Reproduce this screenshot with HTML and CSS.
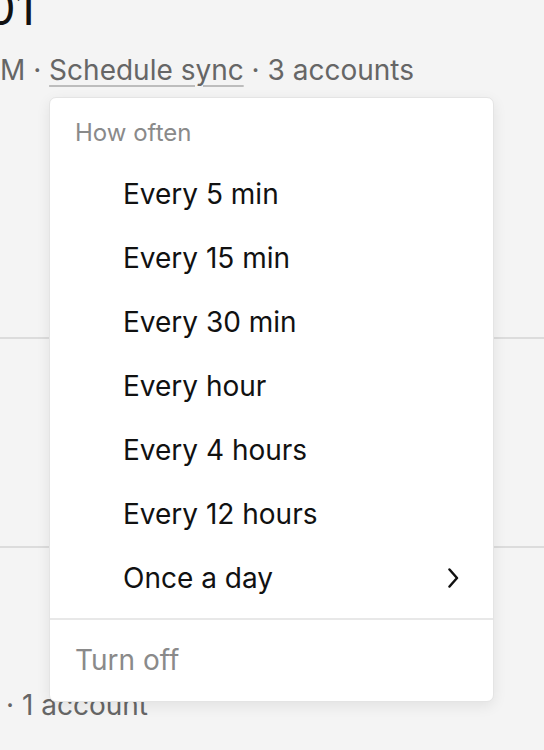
FILE: index.html
```html
<!DOCTYPE html>
<html lang="en">
<head>
<meta charset="utf-8">
<title>Schedule sync</title>
<link rel="stylesheet" href="styles.css">
</head>
<body>
<main class="page">
  <section class="row row-first">
    <h1 class="title">01</h1>
    <p class="meta">M · <span class="link">Schedule sync</span> · 3 accounts</p>
  </section>
  <section class="row row-mid"></section>
  <section class="row row-last">
    <p class="meta meta-last">· 1 account</p>
  </section>
</main>

<div class="menu" role="menu">
  <div class="menu-header">How often</div>
  <ul class="menu-list">
    <li class="menu-item">Every 5 min</li>
    <li class="menu-item">Every 15 min</li>
    <li class="menu-item">Every 30 min</li>
    <li class="menu-item">Every hour</li>
    <li class="menu-item">Every 4 hours</li>
    <li class="menu-item">Every 12 hours</li>
    <li class="menu-item menu-item-sub">
      <span>Once a day</span>
      <svg class="chevron" width="12" height="20" viewBox="0 0 12 20" aria-hidden="true">
        <polyline points="2.5,1.5 10,10 2.5,18.5" fill="none" stroke="#111" stroke-width="2.5" stroke-linecap="round" stroke-linejoin="round"/>
      </svg>
    </li>
  </ul>
  <div class="menu-footer">Turn off</div>
</div>
</body>
</html>
```

FILE: styles.css
```css
* { box-sizing: border-box; }

html, body {
  margin: 0;
  padding: 0;
}

body {
  background: #f4f4f4;
  font-family: Inter, "Noto Sans", "Liberation Sans", sans-serif;
  color: #111;
  width: 544px;
  height: 750px;
  overflow: hidden;
  position: relative;
}

.page {
  display: flex;
  flex-direction: column;
}

.row {
  display: flex;
  flex-direction: column;
}

.row-first {
  height: 339px;
  border-bottom: 2px solid #dcdcdc;
}

.row-mid {
  height: 209px;
  border-bottom: 2px solid #dcdcdc;
}

.title {
  margin: -14px 0 0 -14px;
  font-size: 47px;
  line-height: 44px;
  font-weight: 400;
  color: #111;
}

.meta {
  margin: 22px 0 0 0;
  font-size: 28px;
  line-height: 36px;
  color: #666;
  white-space: nowrap;
}

.link {
  text-decoration: underline;
  text-decoration-color: #bdbdbd;
  text-decoration-thickness: 2px;
  text-underline-offset: 5px;
}

.meta-last {
  margin-top: 139px;
  padding-left: 6px;
}

.menu {
  position: absolute;
  left: 49px;
  top: 97px;
  width: 445px;
  background: #fff;
  border: 1px solid #e4e4e4;
  border-radius: 7px;
  box-shadow: 0 4px 14px rgba(0, 0, 0, 0.08);
  display: flex;
  flex-direction: column;
}

.menu-header {
  height: 64px;
  padding: 20px 0 0 25px;
  font-size: 24px;
  line-height: 30px;
  color: #8a8a8a;
}

.menu-list {
  list-style: none;
  margin: 0;
  padding: 0 0 8px 0;
  border-bottom: 2px solid #e8e8e8;
}

.menu-item {
  height: 64px;
  padding: 0 34px 0 73px;
  font-size: 28px;
  line-height: 64px;
  color: #111;
  display: flex;
  align-items: center;
  justify-content: space-between;
}

.chevron {
  display: block;
}

.menu-footer {
  height: 81px;
  padding-left: 25px;
  font-size: 28px;
  line-height: 81px;
  color: #8a8a8a;
}
```
